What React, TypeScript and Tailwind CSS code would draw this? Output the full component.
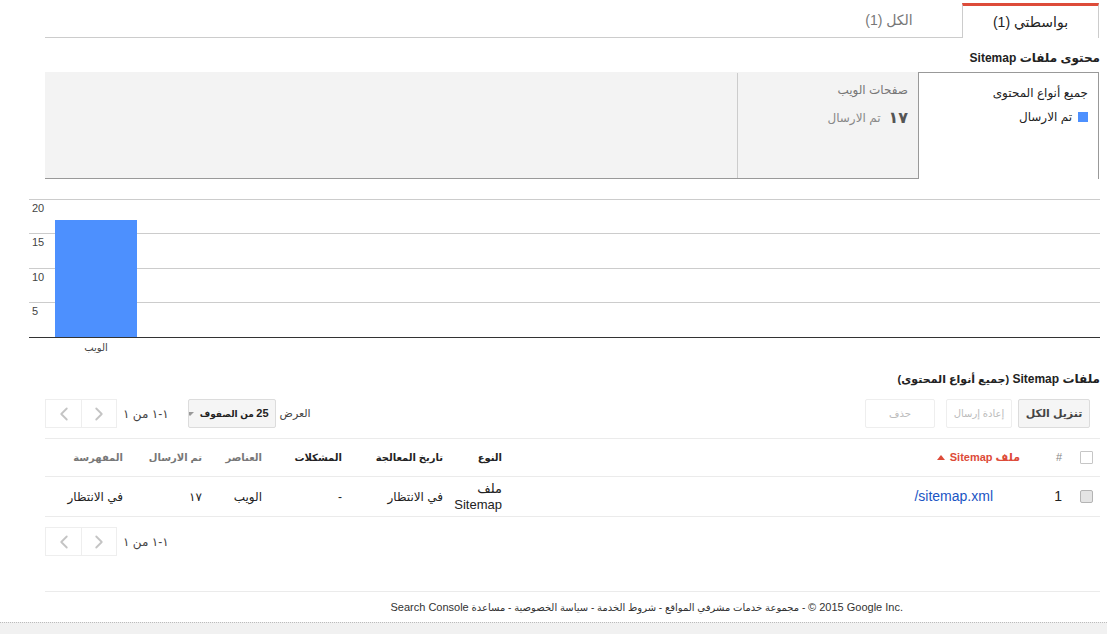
import { ChevronLeft, ChevronRight } from 'lucide-react';

const FONT = { fontFamily: '"Liberation Sans", "DejaVu Sans", Arial, sans-serif' };

function Pager() {
  return (
    <div className="flex items-center gap-[6px]">
      <span className="text-[12px] text-[#444]">١-١ من ١</span>
      <div className="flex">
        <div className="w-[36px] h-[29px] border border-[#eee] flex items-center justify-center text-[#c4c4c4]">
          <ChevronRight size={22} strokeWidth={2} />
        </div>
        <div className="w-[36px] h-[29px] border border-[#eee] border-r-0 flex items-center justify-center text-[#c4c4c4]">
          <ChevronLeft size={22} strokeWidth={2} />
        </div>
      </div>
    </div>
  );
}

function Chart() {
  const grid = [9, 43, 78, 112];
  const labels = [
    { t: '20', y: 22 },
    { t: '15', y: 56 },
    { t: '10', y: 91 },
    { t: '5', y: 125 },
  ];
  return (
    <svg width={1071} height={170} className="block" style={{ fontFamily: '"Liberation Sans", "DejaVu Sans", sans-serif' }}>
      {grid.map((y) => (
        <line key={y} x1={0} x2={1071} y1={y + 0.5} y2={y + 0.5} stroke="#cccccc" strokeWidth={1} />
      ))}
      {labels.map((l) => (
        <text key={l.t} x={3} y={l.y} fontSize={11} fill="#444" direction="ltr" textAnchor="start">
          {l.t}
        </text>
      ))}
      <rect x={26} y={30} width={82} height={117} fill="#4d90fe" />
      <line x1={0} x2={1071} y1={147.5} y2={147.5} stroke="#333" strokeWidth={1} />
      <text x={67} y={161} fontSize={10} fill="#444" textAnchor="middle">الويب</text>
    </svg>
  );
}

const COLS = 'grid grid-cols-[30px_40px_520px_60px_100px_80px_60px_80px_85px]';

export default function App() {
  return (
    <div dir="rtl" className="w-[1107px] h-[634px] bg-white text-[#222] overflow-hidden flex flex-col" style={FONT}>
      <div className="pr-[7px]">
        {/* tabs */}
        <div className="flex h-[38px] pt-[3px] ml-[45px] mr-[1px]">
          <div className="w-[137px] border-t-[3px] border-t-[#dd4b39] border-x border-x-[#ccc] bg-white flex items-center justify-center text-[14px] text-[#222]">
            بواسطتي (1)
          </div>
          <div className="w-[146px] border-b border-[#ccc] flex items-center justify-center text-[14px] text-[#777]">
            الكل (1)
          </div>
          <div className="flex-1 border-b border-[#ccc]" />
        </div>

        <div className="ml-[45px] mt-[12px] h-[16px] leading-[16px] text-[12px] font-bold text-[#222]">
          محتوى ملفات Sitemap
        </div>

        {/* summary panel */}
        <div className="ml-[45px] mr-[1px] mt-[6px] flex h-[107px]">
          <div className="w-[181px] border-t border-x border-[#999] bg-white pr-[10px] pt-[12px]">
            <div className="text-[12px] text-[#222] leading-[16px]">جميع أنواع المحتوى</div>
            <div className="flex items-center gap-[6px] mt-[8px]">
              <span className="w-[10px] h-[10px] bg-[#4d90fe]" />
              <span className="text-[12px] text-[#222] leading-[16px]">تم الارسال</span>
            </div>
          </div>
          <div className="flex-1 bg-[#f3f3f3] border-b border-[#999] border-t border-t-[#f3f3f3] flex">
            <div className="w-[181px] border-l border-[#ccc] pr-[10px] pt-[9px]">
              <div className="text-[12px] text-[#777] leading-[16px]">صفحات الويب</div>
              <div className="flex items-center gap-[8px] mt-[11px]">
                <span className="text-[16px] font-bold text-[#555] leading-[18px]">١٧</span>
                <span className="text-[12px] text-[#888] leading-[16px]">تم الارسال</span>
              </div>
            </div>
            <div className="flex-1" />
          </div>
        </div>

        {/* chart */}
        <div className="mt-[11px] ml-[29px] flex justify-end" dir="ltr">
          <Chart />
        </div>

        <div className="ml-[45px] mt-[11px] h-[16px] leading-[16px] text-[12px] font-bold text-[#222] whitespace-nowrap">
          ملفات Sitemap <span className="text-[11px]">(جميع أنواع المحتوى)</span>
        </div>

        {/* toolbar */}
        <div className="ml-[45px] mt-[12px] h-[29px] flex justify-between items-center pr-[10px]">
          <div className="flex items-center">
            <button className="w-[72px] h-[29px] bg-[#f5f5f5] border border-[#dcdcdc] rounded-[2px] text-[11px] font-bold text-[#444] whitespace-nowrap">
              تنزيل الكل
            </button>
            <button className="mr-[6px] w-[66px] h-[29px] bg-white border border-[#eee] rounded-[2px] text-[10px] text-[#bbb] whitespace-nowrap">
              إعادة إرسال
            </button>
            <button className="mr-[11px] w-[70px] h-[29px] bg-white border border-[#eee] rounded-[2px] text-[10px] text-[#bbb]">
              حذف
            </button>
          </div>
          <div className="flex items-center">
            <span className="text-[11px] text-[#444]">العرض</span>
            <div className="mr-[4px] w-[88px] h-[29px] bg-[#f5f5f5] border border-[#dcdcdc] rounded-[2px] flex items-center gap-[6px] pr-[6px] overflow-hidden">
              <span className="text-[9px] font-bold text-[#222] whitespace-nowrap">
                <span className="text-[11px]">25</span> من الصفوف
              </span>
              <span className="w-0 h-0 border-l-[4px] border-r-[4px] border-t-[4px] border-l-transparent border-r-transparent border-t-[#999]" />
            </div>
            <div className="mr-[19px]">
              <Pager />
            </div>
          </div>
        </div>

        {/* table */}
        <div className="ml-[45px] mt-[10px] border-t border-[#ebebeb]">
          <div className={`${COLS} h-[38px] items-center border-b border-[#ebebeb] text-[10px] font-bold`}>
            <div className="pr-[7px] flex">
              <span className="w-[13px] h-[13px] border border-[#c6c6c6] bg-white rounded-[1px]" />
            </div>
            <div className="pr-[8px] text-[#888] text-[11px] font-normal">#</div>
            <div className="pr-[10px] text-[#dd4b39] text-[11px] flex items-center gap-[5px]">
              <span>ملف Sitemap</span>
              <span className="w-0 h-0 border-l-[4px] border-r-[4px] border-b-[5px] border-l-transparent border-r-transparent border-b-[#dd4b39]" />
            </div>
            <div className="pr-[8px] text-[#222]">النوع</div>
            <div className="pr-[7px] text-[#222]">تاريخ المعالجة</div>
            <div className="pr-[8px] text-[#222]">المشكلات</div>
            <div className="pr-[8px] text-[#777]">العناصر</div>
            <div className="pr-[8px] text-[#777]">تم الارسال</div>
            <div className="pr-[7px] text-[#777]">المفهرسة</div>
          </div>
          <div className={`${COLS} h-[40px] items-center border-b border-[#ebebeb] text-[12px] text-[#222]`}>
            <div className="pr-[7px] flex">
              <span className="w-[13px] h-[13px] border border-[#b4b4b4] bg-[#e4e4e4] rounded-[2px]" />
            </div>
            <div className="pr-[8px] text-[14px]">1</div>
            <div className="pr-[37px] text-[14px] text-[#1a55c4]">
              <span dir="ltr">/sitemap.xml</span>
            </div>
            <div className="pr-[8px] text-[13px] leading-[16px]">ملف Sitemap</div>
            <div className="pr-[7px]">في الانتظار</div>
            <div className="pr-[8px]">-</div>
            <div className="pr-[8px]">الويب</div>
            <div className="pr-[8px]">١٧</div>
            <div className="pr-[7px]">في الانتظار</div>
          </div>
        </div>

        <div className="ml-[45px] mt-[10px] h-[29px] flex justify-end">
          <Pager />
        </div>

        {/* footer */}
        <div className="ml-[45px] mt-[35px] h-[31px] border-t border-[#ebebeb] flex items-center pr-[197px] text-[11px] text-[#333]">
          <span className="whitespace-nowrap">
            <span dir="ltr">© 2015 Google Inc.</span>
            <span className="text-[10px]"> - مجموعة خدمات مشرفي المواقع - شروط الخدمة - سياسة الخصوصية - مساعدة </span>
            Search Console
          </span>
        </div>
      </div>
      <div className="flex-1 border-t border-dotted border-[#bbb] bg-[#f1f1f1]" />
    </div>
  );
}
